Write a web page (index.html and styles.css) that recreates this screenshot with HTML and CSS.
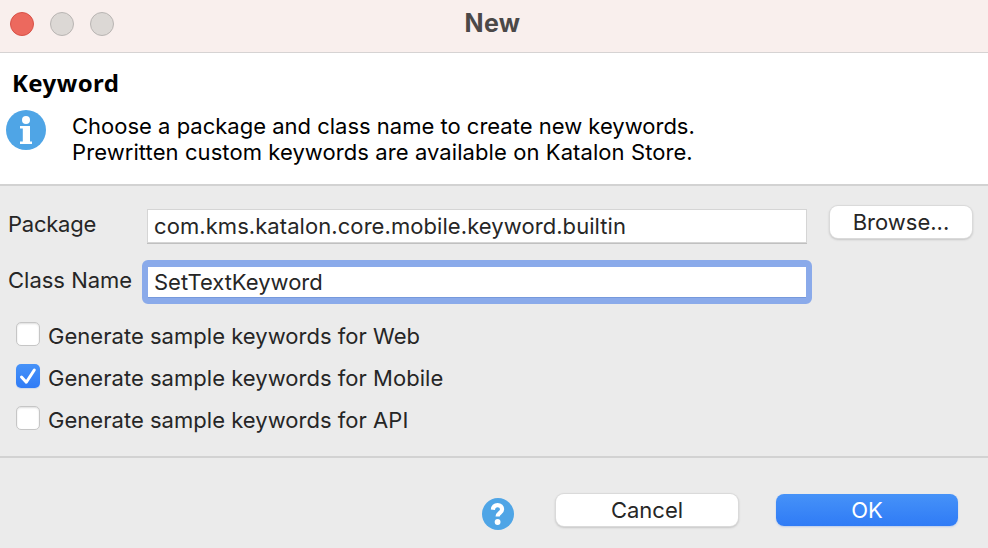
FILE: index.html
```html
<!DOCTYPE html>
<html lang="en">
<head>
<meta charset="utf-8">
<title>New</title>
<link rel="stylesheet" href="styles.css">
</head>
<body>
<main class="window">
  <header class="titlebar">
    <div class="lights"><i class="light close"></i><i class="light"></i><i class="light"></i></div>
    <h1 class="title">New</h1>
  </header>
  <section class="banner">
    <h2 class="heading">Keyword</h2>
    <div class="message">
      <svg class="info" viewBox="0 0 40 40"><circle cx="20" cy="20" r="20" fill="#4fa5e6"/><circle cx="20" cy="10" r="4" fill="#fff"/><path d="M14 16h10v15.500H26V34H14v-2.500h2.800V18.500H14z" fill="#fff"/></svg>
      <p class="lines"><span class="line-a">Choose a package and class name to create new keywords.</span><br><span class="line-b">Prewritten custom keywords are available on Katalon Store.</span></p>
    </div>
  </section>
  <section class="form">
    <div class="row">
      <span class="label package">Package</span>
      <div class="field"><span class="package-value">com.kms.katalon.core.mobile.keyword.builtin</span></div>
      <button class="button browse"><span>Browse...</span></button>
    </div>
    <div class="row second">
      <span class="label class-name">Class Name</span>
      <div class="field focused"><span>SetTextKeyword</span></div>
    </div>
    <div class="options">
      <div class="option"><i class="box"></i><span>Generate sample keywords for Web</span></div>
      <div class="option"><i class="box checked"><svg viewBox="0 0 24 24"><path d="M5.500 13l4.800 5.200L18.300 6" fill="none" stroke="#fff" stroke-width="3" stroke-linecap="round" stroke-linejoin="round"/></svg></i><span>Generate sample keywords for Mobile</span></div>
      <div class="option"><i class="box"></i><span>Generate sample keywords for API</span></div>
    </div>
  </section>
  <footer class="footer">
    <svg class="help" viewBox="0 0 32 32"><circle cx="16" cy="16" r="16" fill="#4fa5e6"/><path d="M10.900 11.800C11.200 8.600 13 7.200 15.600 7.200c2.800 0 4.500 1.600 4.500 4 0 3.700-4.400 3.600-4.500 7.300" fill="none" stroke="#fff" stroke-width="4.200"/><circle cx="15.600" cy="24" r="2.900" fill="#fff"/></svg>
    <button class="button cancel"><span>Cancel</span></button>
    <button class="button ok"><span>OK</span></button>
  </footer>
</main>
</body>
</html>
```
FILE: styles.css
```css
* { box-sizing: border-box; }
body { margin: 0; background: #ebebeb; }
.window {
  width: 988px; height: 548px; display: flex; flex-direction: column;
  overflow: hidden; background: #ebebeb; color: #262626;
  font: 22px/26px Inter, "Liberation Sans", sans-serif;
  white-space: nowrap;
}
.titlebar {
  height: 53px; flex: none; display: grid; grid-template-columns: 1fr auto 1fr;
  background: #f9efed; border-bottom: 1px solid #d6d3d3;
}
.lights { display: flex; gap: 16px; padding: 12px 0 0 10px; }
.light { width: 24px; height: 24px; border-radius: 50%; background: #dcd8d5; border: 1px solid #b9b5b3; }
.close { background: #ec695e; border-color: #d85147; }
.title { margin: 9px 0 0; padding-right: 3px; font-size: 25px; line-height: 28px; font-weight: 700; letter-spacing: 0.3px; color: #4b4848; }
.banner { height: 133px; flex: none; background: #fff; border-bottom: 2px solid #d2d2d2; padding: 14px 6px 0; color: #000; }
.heading { margin: 0 0 0 6px; font: 700 24px/32px "Noto Sans", sans-serif; letter-spacing: 0.4px; }
.message { display: flex; gap: 26px; align-items: flex-start; padding-top: 11px; }
.info { width: 40px; height: 40px; }
.lines { margin: 3px 0 0; }
.line-b { letter-spacing: 0.08px; }
.form { height: 272px; flex: none; border-bottom: 2px solid #d2d2d2; padding: 19px 0 0 8px; }
.row { display: flex; height: 46px; align-items: flex-start; }
.label { width: 140px; margin-top: 6px; }
.package { letter-spacing: -0.25px; }
.package-value { letter-spacing: 0.07px; }
.field { width: 658px; height: 32px; padding: 3px 0 0 6px; margin-top: 5px; background: #fff; box-shadow: 0 0 0 1px #d5d5d5, 0 1px 0 1px #c0c0c0; }
.second { margin-top: 10px; }
.focused {
  width: 670px; height: 44px; margin: -1px 0 0 -6px; padding: 2px 0 0 6px;
  border: 6px solid #8aaaea; border-top-width: 7px; border-radius: 6px;
  box-shadow: inset 0 -1px 0 #7699dc;
}
.button {
  font: inherit; line-height: 32px; color: #262626; background: #fff; border: 0; border-radius: 8px; padding: 0; height: 32px;
  box-shadow: 0 0 0 1px #dadada, 0 1px 2px 1px #c6c6c6;
}
.browse { width: 142px; margin-left: 24px; margin-top: 1px; }
.options { display: flex; flex-direction: column; gap: 16px; padding: 14px 0 0 8px; }
.option { display: flex; height: 26px; gap: 8px; letter-spacing: 0.03px; }
.box { width: 24px; height: 24px; border-radius: 5px; background: #fff; border: 1px solid #c6c6c6; box-shadow: inset 0 1px 2px #dedede; margin-top: 1px; }
.checked { border: 0; background: linear-gradient(#4692f8, #2f7bf6); box-shadow: 0 1px 1px #cbd7ec; }
.box svg { display: block; width: 24px; height: 24px; }
.option span { margin-top: 2px; }
.footer { display: flex; align-items: flex-start; padding: 36px 30px 0 482px; height: 90px; }
.help { width: 32px; height: 32px; margin-top: 4px; }
.cancel { width: 182px; margin-left: 42px; }
.ok { width: 182px; margin-left: 38px; color: #fff; background: linear-gradient(#4692f8, #2f7bf6); box-shadow: 0 1px 2px #b9cbea; }
```
